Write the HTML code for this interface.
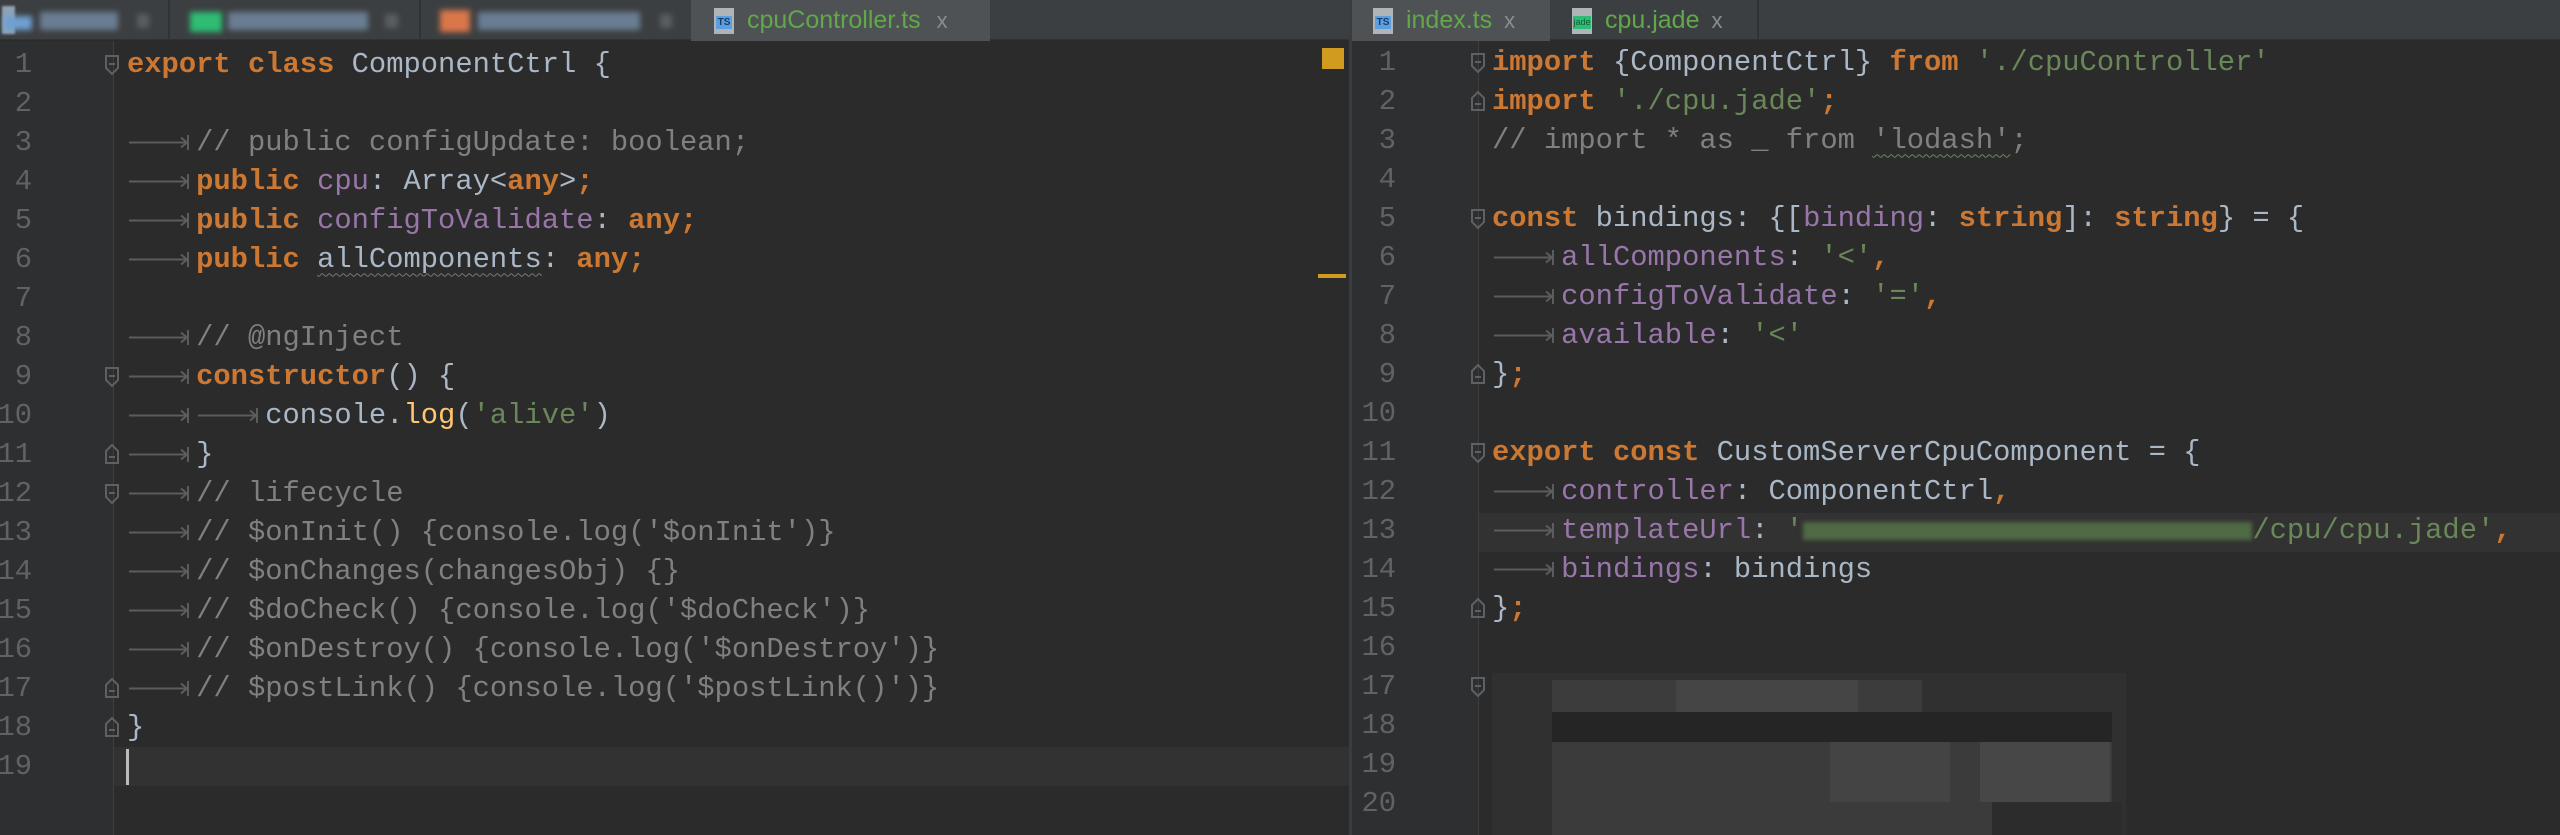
<!DOCTYPE html>
<html><head><meta charset="utf-8">
<style>
*{margin:0;padding:0;box-sizing:border-box}
html,body{width:2560px;height:835px;overflow:hidden;background:#2b2b2b}
body{position:relative;font-family:"Liberation Mono",monospace;font-size:28.8px;color:#a9b7c6}
.abs{position:absolute}
.tabbar{position:absolute;top:0;height:40px;background:#3c3f41;border-bottom:1px solid #323232}
.tab{position:absolute;top:0;height:40px;font-family:"Liberation Sans",sans-serif;font-size:25px;line-height:40px;color:#62a84a;white-space:nowrap}
.ln{position:absolute;width:40px;text-align:right;color:#606366;line-height:39px;height:39px}
.l{position:absolute;white-space:pre;line-height:39px;height:39px}
.k{color:#cc7832;font-weight:bold}
.p{color:#9876aa}
.s{color:#6a8759}
.c{color:#808080}
.f{color:#ffc66d}
.t{display:inline-block;width:4ch;height:39px;vertical-align:top;position:relative}
.t svg{position:absolute;left:0;top:0}
.w{text-decoration:underline wavy #6a8759;text-decoration-thickness:1px;text-underline-offset:6px}
.wg{text-decoration:underline wavy #777;text-decoration-thickness:1px;text-underline-offset:6px}
.blur{position:absolute;filter:blur(3px)}
</style></head><body>
<!-- LEFT TAB BAR -->
<div class="tabbar" style="left:0;width:1349px"></div>
<div class="abs" style="left:2px;top:6px;width:13px;height:28px;background:#8fa3b8;filter:blur(1px)"></div>
<div class="blur" style="left:4px;top:16px;width:28px;height:14px;background:#6fa0d0"></div>
<div class="blur" style="left:40px;top:12px;width:78px;height:18px;background:#6a7d92"></div>
<div class="blur" style="left:137px;top:14px;width:12px;height:14px;background:#5a5e62"></div>
<div class="abs" style="left:168px;top:0;width:2px;height:40px;background:#303234"></div>
<div class="blur" style="left:190px;top:12px;width:32px;height:20px;background:#2ebd74"></div>
<div class="blur" style="left:228px;top:12px;width:140px;height:18px;background:#6a7d92"></div>
<div class="blur" style="left:385px;top:14px;width:13px;height:14px;background:#5a5e62"></div>
<div class="abs" style="left:419px;top:0;width:2px;height:40px;background:#303234"></div>
<div class="blur" style="left:440px;top:10px;width:30px;height:22px;background:#d9774a"></div>
<div class="blur" style="left:478px;top:12px;width:162px;height:18px;background:#6a7d92"></div>
<div class="blur" style="left:660px;top:14px;width:12px;height:14px;background:#5a5e62"></div>
<div class="abs" style="left:691px;top:0;width:299px;height:41px;background:#4e5254"></div>
<div class="tab" style="left:714px">
 <span style="display:inline-block;width:20px;height:26px;background:#b0b4b8;vertical-align:-6px;position:relative"><span style="position:absolute;left:2px;top:8px;width:16px;height:13px;background:#5a9fe0;color:#1c3d66;font-size:10px;line-height:13px;text-align:center;font-weight:bold">TS</span></span>
 <span style="margin-left:6px">cpuController.ts</span><span style="color:#8a8d90;margin-left:16px;font-size:22px">x</span>
</div>
<!-- RIGHT TAB BAR -->
<div class="tabbar" style="left:1352px;width:1208px"></div>
<div class="abs" style="left:1352px;top:0;width:198px;height:41px;background:#4e5254"></div>
<div class="tab" style="left:1373px">
 <span style="display:inline-block;width:20px;height:26px;background:#b0b4b8;vertical-align:-6px;position:relative"><span style="position:absolute;left:2px;top:8px;width:16px;height:13px;background:#5a9fe0;color:#1c3d66;font-size:10px;line-height:13px;text-align:center;font-weight:bold">TS</span></span>
 <span style="margin-left:6px">index.ts</span><span style="color:#8a8d90;margin-left:12px;font-size:22px">x</span>
</div>
<div class="abs" style="left:1757px;top:0;width:2px;height:40px;background:#303234"></div>
<div class="tab" style="left:1572px">
 <span style="display:inline-block;width:20px;height:26px;background:#b0b4b8;vertical-align:-6px;position:relative"><span style="position:absolute;left:1px;top:8px;width:18px;height:13px;background:#2ebd74;color:#145a34;font-size:9px;line-height:13px;text-align:center">jade</span></span>
 <span style="margin-left:6px">cpu.jade</span><span style="color:#8a8d90;margin-left:12px;font-size:22px">x</span>
</div>
<!-- divider -->
<div class="abs" style="left:1349px;top:0;width:3px;height:835px;background:#3a3c3e"></div>
<!-- gutters -->
<div class="abs" style="left:0;top:41px;width:113px;height:794px;background:#2e2f30"></div>
<div class="abs" style="left:113px;top:41px;width:1px;height:794px;background:#3d3f41"></div>
<div class="abs" style="left:1352px;top:41px;width:126px;height:794px;background:#2e2f30"></div>
<div class="abs" style="left:1478px;top:41px;width:1px;height:794px;background:#3d3f41"></div>
<!-- current lines -->
<div class="abs" style="left:114px;top:747px;width:1235px;height:39px;background:#323232"></div>
<div class="abs" style="left:1479px;top:513px;width:1081px;height:39px;background:#323232"></div>
<div class="abs" style="left:126px;top:749px;width:3px;height:36px;background:#bbb"></div>
<!-- markers -->
<div class="abs" style="left:1322px;top:48px;width:22px;height:21px;background:#d09b1f"></div>
<div class="abs" style="left:1318px;top:274px;width:28px;height:4px;background:#d09b1f"></div>

<svg width="0" height="0" style="position:absolute"><defs>
<symbol id="ar" viewBox="0 0 69 39"><path d="M2 19.5H60M54 14.5L60 19.5L54 24.5M61 12V27" stroke="#5a5c5e" stroke-width="2" fill="none"/></symbol>
</defs></svg>

<div id="lnl"></div>
<script>
var h='';for(var i=1;i<=19;i++){h+='<div class="ln" style="left:-8px;top:'+(44.5+(i-1)*39)+'px">'+i+'</div>'}
for(var i=1;i<=20;i++){h+='<div class="ln" style="left:1356px;top:'+(42.5+(i-1)*39)+'px">'+i+'</div>'}
document.getElementById('lnl').innerHTML=h;
</script>
<!-- fold markers -->
<svg class="abs" style="left:0;top:0" width="2560" height="835">
<g stroke="#5e6062" stroke-width="2" fill="none">
<path d="M106 56h12v12l-6 6l-6-6z M109 64h6"/>
<path d="M106 368h12v12l-6 6l-6-6z M109 376h6"/>
<path d="M106 451l6-6l6 6v12h-12z M109 457h6"/>
<path d="M106 485h12v12l-6 6l-6-6z M109 493h6"/>
<path d="M106 685l6-6l6 6v12h-12z M109 691h6"/>
<path d="M106 724l6-6l6 6v12h-12z M109 730h6"/>
<path d="M1472 54h12v12l-6 6l-6-6z M1475 62h6"/>
<path d="M1472 98l6-6l6 6v12h-12z M1475 104h6"/>
<path d="M1472 210h12v12l-6 6l-6-6z M1475 218h6"/>
<path d="M1472 371l6-6l6 6v12h-12z M1475 377h6"/>
<path d="M1472 444h12v12l-6 6l-6-6z M1475 452h6"/>
<path d="M1472 605l6-6l6 6v12h-12z M1475 611h6"/>
<path d="M1472 678h12v12l-6 6l-6-6z M1475 686h6"/>
</g></svg>

<!-- LEFT CODE -->
<div class="l" style="left:127px;top:44.5px"><span class="k">export</span> <span class="k">class</span> ComponentCtrl {</div>
<div class="l" style="left:127px;top:122.5px"><span class="t"><svg width="69" height="39"><use href="#ar"/></svg></span><span class="c">// public configUpdate: boolean;</span></div>
<div class="l" style="left:127px;top:161.5px"><span class="t"><svg width="69" height="39"><use href="#ar"/></svg></span><span class="k">public</span> <span class="p">cpu</span>: Array&lt;<span class="k">any</span>&gt;<span class="k">;</span></div>
<div class="l" style="left:127px;top:200.5px"><span class="t"><svg width="69" height="39"><use href="#ar"/></svg></span><span class="k">public</span> <span class="p">configToValidate</span>: <span class="k">any;</span></div>
<div class="l" style="left:127px;top:239.5px"><span class="t"><svg width="69" height="39"><use href="#ar"/></svg></span><span class="k">public</span> <span class="wg" style="color:#a9b7c6">allComponents</span>: <span class="k">any;</span></div>
<div class="l" style="left:127px;top:317.5px"><span class="t"><svg width="69" height="39"><use href="#ar"/></svg></span><span class="c">// @ngInject</span></div>
<div class="l" style="left:127px;top:356.5px"><span class="t"><svg width="69" height="39"><use href="#ar"/></svg></span><span class="k">constructor</span>() {</div>
<div class="l" style="left:127px;top:395.5px"><span class="t"><svg width="69" height="39"><use href="#ar"/></svg></span><span class="t"><svg width="69" height="39"><use href="#ar"/></svg></span>console.<span class="f">log</span>(<span class="s">'alive'</span>)</div>
<div class="l" style="left:127px;top:434.5px"><span class="t"><svg width="69" height="39"><use href="#ar"/></svg></span>}</div>
<div class="l" style="left:127px;top:473.5px"><span class="t"><svg width="69" height="39"><use href="#ar"/></svg></span><span class="c">// lifecycle</span></div>
<div class="l" style="left:127px;top:512.5px"><span class="t"><svg width="69" height="39"><use href="#ar"/></svg></span><span class="c">// $onInit() {console.log('$onInit')}</span></div>
<div class="l" style="left:127px;top:551.5px"><span class="t"><svg width="69" height="39"><use href="#ar"/></svg></span><span class="c">// $onChanges(changesObj) {}</span></div>
<div class="l" style="left:127px;top:590.5px"><span class="t"><svg width="69" height="39"><use href="#ar"/></svg></span><span class="c">// $doCheck() {console.log('$doCheck')}</span></div>
<div class="l" style="left:127px;top:629.5px"><span class="t"><svg width="69" height="39"><use href="#ar"/></svg></span><span class="c">// $onDestroy() {console.log('$onDestroy')}</span></div>
<div class="l" style="left:127px;top:668.5px"><span class="t"><svg width="69" height="39"><use href="#ar"/></svg></span><span class="c">// $postLink() {console.log('$postLink()')}</span></div>
<div class="l" style="left:127px;top:707.5px">}</div>

<!-- RIGHT CODE -->
<div class="l" style="left:1492px;top:42.5px"><span class="k">import</span> {ComponentCtrl} <span class="k">from</span> <span class="s">'./cpuController'</span></div>
<div class="l" style="left:1492px;top:81.5px"><span class="k">import</span> <span class="s">'./cpu.jade'</span><span class="k">;</span></div>
<div class="l" style="left:1492px;top:120.5px"><span class="c">// import * as _ from <span class="w">'lodash'</span>;</span></div>
<div class="l" style="left:1492px;top:198.5px"><span class="k">const</span> bindings: {[<span class="p">binding</span>: <span class="k">string</span>]: <span class="k">string</span>} = {</div>
<div class="l" style="left:1492px;top:237.5px"><span class="t"><svg width="69" height="39"><use href="#ar"/></svg></span><span class="p">allComponents</span>: <span class="s">'&lt;'</span><span class="k">,</span></div>
<div class="l" style="left:1492px;top:276.5px"><span class="t"><svg width="69" height="39"><use href="#ar"/></svg></span><span class="p">configToValidate</span>: <span class="s">'='</span><span class="k">,</span></div>
<div class="l" style="left:1492px;top:315.5px"><span class="t"><svg width="69" height="39"><use href="#ar"/></svg></span><span class="p">available</span>: <span class="s">'&lt;'</span></div>
<div class="l" style="left:1492px;top:354.5px">}<span class="k">;</span></div>
<div class="l" style="left:1492px;top:432.5px"><span class="k">export</span> <span class="k">const</span> CustomServerCpuComponent = {</div>
<div class="l" style="left:1492px;top:471.5px"><span class="t"><svg width="69" height="39"><use href="#ar"/></svg></span><span class="p">controller</span>: ComponentCtrl<span class="k">,</span></div>
<div class="l" style="left:1492px;top:510.5px"><span class="t"><svg width="69" height="39"><use href="#ar"/></svg></span><span class="p">templateUrl</span>: <span class="s">'<span style="display:inline-block;width:26ch;height:18px;background:#4f6a45;filter:blur(2px);vertical-align:-2px"></span>/cpu/cpu.jade'</span><span class="k">,</span></div>
<div class="l" style="left:1492px;top:549.5px"><span class="t"><svg width="69" height="39"><use href="#ar"/></svg></span><span class="p">bindings</span>: bindings</div>
<div class="l" style="left:1492px;top:588.5px">}<span class="k">;</span></div>

<!-- blurred bottom right -->
<div class="abs" style="left:1492px;top:673px;width:634px;height:162px;background:#303030"></div>
<div class="abs" style="left:1552px;top:680px;width:370px;height:32px;background:#3c3c3c"></div>
<div class="abs" style="left:1676px;top:680px;width:182px;height:32px;background:#454545"></div>
<div class="abs" style="left:1552px;top:712px;width:560px;height:30px;background:#252525"></div>
<div class="abs" style="left:1552px;top:742px;width:560px;height:93px;background:#3b3b3b"></div>
<div class="abs" style="left:1830px;top:742px;width:120px;height:60px;background:#444"></div>
<div class="abs" style="left:1980px;top:742px;width:130px;height:60px;background:#474747"></div>
<div class="abs" style="left:1992px;top:802px;width:130px;height:33px;background:#2c2c2c"></div>
</body></html>
